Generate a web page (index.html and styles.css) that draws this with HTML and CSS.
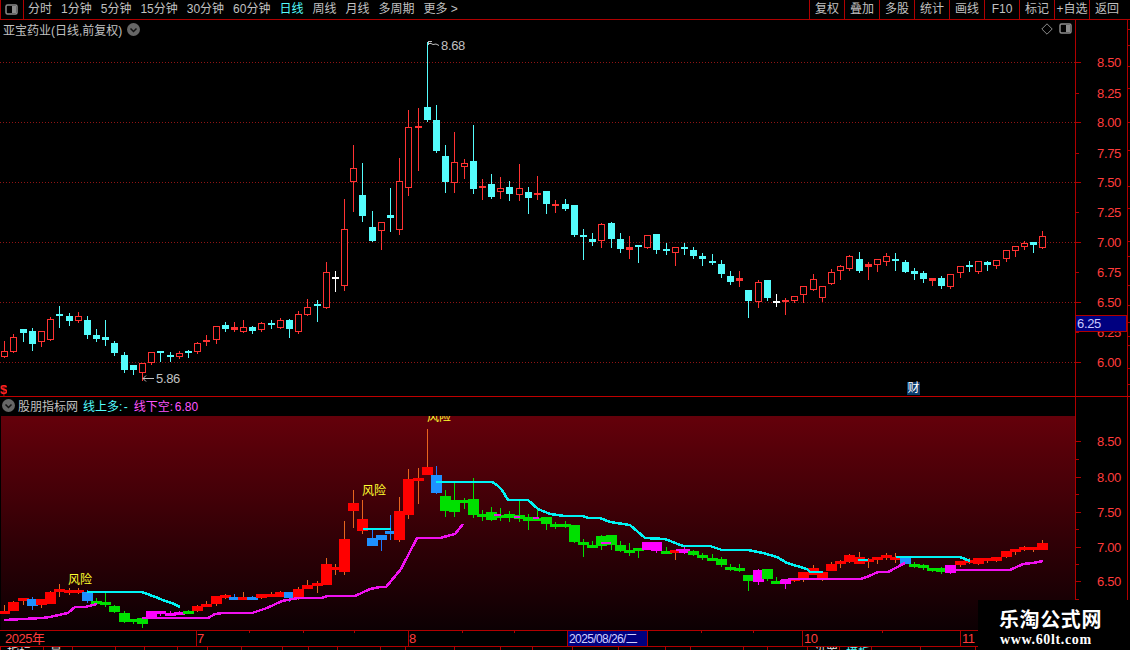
FILE: index.html
```html
<!DOCTYPE html>
<html lang="zh-CN">
<head>
<meta charset="utf-8">
<title>亚宝药业 K线</title>
<link rel="stylesheet" href="styles.css">
</head>
<body>
<div class="app">
  <header class="toolbar">
    <div class="layout-btn">
      <svg width="14" height="12" viewBox="0 0 14 12"><rect class="ic-frame" x="1" y="1" width="11" height="9" rx="1.5"/><rect class="ic-fill" x="7" y="2" width="4" height="7"/></svg>
    </div>
    <nav class="periods">
      <span>分时</span><span>1分钟</span><span>5分钟</span><span>15分钟</span><span>30分钟</span><span>60分钟</span><span class="active">日线</span><span>周线</span><span>月线</span><span>多周期</span><span>更多 &gt;</span>
    </nav>
    <div class="actions">
      <span>复权</span><span>叠加</span><span>多股</span><span>统计</span><span>画线</span><span>F10</span><span>标记</span><span>+自选</span><span class="last">返回</span>
    </div>
  </header>

  <section class="panel panel-upper">
    <svg id="upper" class="chart" viewBox="0 20 1130 376" width="1130" height="376"></svg>
    <div class="legend legend-upper">
      <span class="stock">亚宝药业(日线,前复权)</span>
      <svg class="chev" width="13" height="13" viewBox="0 0 13 13"><circle cx="6.5" cy="6.5" r="6.5"/><path d="M3.5 5.5l3 3 3-3"/></svg>
    </div>
    <div class="tools">
      <svg width="12" height="12" viewBox="0 0 12 12"><path class="ic-line" d="M6 .8L11.2 6 6 11.2.8 6z"/></svg>
      <svg width="14" height="12" viewBox="0 0 14 12"><rect class="ic-frame" x="1" y="1" width="11" height="9" rx="1.5"/><rect class="ic-fill" x="7" y="2" width="4" height="7"/></svg>
    </div>
    <div class="cai">财</div>
    <div class="clip-mark">$</div>
  </section>

  <section class="panel panel-lower">
    <svg id="lower" class="chart" viewBox="0 397 1130 233" width="1130" height="233">
      <defs>
        <linearGradient id="bg" x1="0" y1="0" x2="0" y2="1">
          <stop offset="0" stop-color="#64000a"/>
          <stop offset="1" stop-color="#0c0003"/>
        </linearGradient>
        <clipPath id="plot"><rect x="0" y="416" width="1075" height="214"/></clipPath>
      </defs>
    </svg>
    <div class="legend legend-lower">
      <svg class="chev" width="13" height="13" viewBox="0 0 13 13"><circle cx="6.5" cy="6.5" r="6.5"/><path d="M3.5 5.5l3 3 3-3"/></svg>
      <span class="ind">股朋指标网</span>
      <span class="up-val">线上多: -</span>
      <span class="down-val">线下空: 6.80</span>
    </div>
  </section>

  <section class="time-axis">
    <svg id="time" class="chart" viewBox="0 630 1130 17" width="1130" height="17"></svg>
  </section>

  <footer id="tabs" class="tabs"></footer>

  <aside class="watermark">
    <div class="wm-title">乐淘公式网</div>
    <div class="wm-url">www.60lt.com</div>
  </aside>
</div>
<script src="script.js"></script>
</body>
</html>
```
FILE: styles.css
```css
* { box-sizing: border-box; }
html, body { margin: 0; padding: 0; background: #000; }
body {
  width: 1130px;
  height: 650px;
  overflow: hidden;
  font-family: "Liberation Sans", "Noto Sans CJK SC", sans-serif;
  font-size: 12px;
  color: #c0c0c0;
}
.app { position: relative; display: flex; flex-direction: column; width: 1130px; height: 650px; overflow: hidden; }

.toolbar { display: flex; align-items: stretch; height: 20px; flex: none; border-bottom: 1px solid #b00000; }
.layout-btn { width: 24px; border-left: 1px solid #b00000; border-right: 1px solid #b00000; display: flex; align-items: center; justify-content: center; }
.periods { display: flex; align-items: center; gap: 9px; padding-left: 4px; white-space: nowrap; line-height: 19px; }
.periods .active { color: #54fcfc; }
.actions { display: flex; margin-left: auto; }
.actions span { width: 35px; text-align: center; line-height: 19px; border-left: 1px solid #b00000; white-space: nowrap; }
.actions .last { width: 41px; padding-right: 6px; }

.ic-frame { fill: none; stroke: #8c8c8c; stroke-width: 1.5; }
.ic-fill { fill: #8c8c8c; }
.ic-line { fill: none; stroke: #8c8c8c; stroke-width: 1; }

.panel { position: relative; flex: none; }
.panel-upper { height: 377px; border-bottom: 1px solid #c00000; }
.panel-lower { height: 233px; }
.chart { display: block; }

.legend { position: absolute; display: flex; align-items: center; white-space: nowrap; }
.legend-upper { left: 3px; top: 1px; gap: 5px; height: 16px; }
.legend-lower { left: 2px; top: 0; gap: 6px; height: 16px; }
.stock { color: #c0c0c0; }
.chev { flex: none; }
.chev circle { fill: #666; }
.chev path { fill: none; stroke: #111; stroke-width: 1.5; }
.ind { margin-left: -3px; color: #c0c0c0; }
.up-val { color: #54fcfc; margin-left: -1px; word-spacing: -2px; }
.down-val { color: #fc54fc; word-spacing: -1.5px; }

.tools { position: absolute; left: 1041px; top: 3px; display: flex; gap: 6px; align-items: center; }
.cai { position: absolute; left: 907px; top: 362px; width: 13px; height: 13px; background: #0c3c6c; color: #fff; font-size: 12px; line-height: 13px; text-align: center; }
.clip-mark { position: absolute; left: 0; top: 363px; width: 7px; height: 13px; overflow: hidden; color: #ff2020; font-weight: bold; font-size: 13px; line-height: 13px; }

.time-axis { flex: none; height: 17px; }
.tabs { display: flex; flex: none; height: 3px; overflow: hidden; }
.tab { flex: none; height: 3px; border-left: 1px solid #b00000; color: #e0e0e0; font-size: 12px; line-height: 12px; white-space: nowrap; overflow: hidden; padding-left: 6px; }
.tab.hot { color: #54fcfc; }

.watermark { position: absolute; right: 0; bottom: 0; width: 152px; height: 50px; background: #000; padding-left: 21px; }
.wm-title { color: #fff; font-weight: bold; font-size: 20px; line-height: 24px; letter-spacing: .6px; margin-top: 7px; font-family: "Noto Sans CJK SC", sans-serif; }
.wm-url { color: #fff; font-family: "Liberation Serif", serif; font-weight: bold; font-size: 14px; line-height: 16px; margin-top: 1px; margin-left: 1px; letter-spacing: .65px; }

/* svg parts */
.grid { stroke: #901414; stroke-width: 1; stroke-dasharray: 1 2; shape-rendering: crispEdges; }
.axis { stroke: #b00000; stroke-width: 1; fill: none; }
.price { fill: #ff3c3c; font-size: 13px; letter-spacing: -.35px; font-family: "Liberation Sans", sans-serif; }
.note { fill: #c0c0c0; font-size: 13px; letter-spacing: -.35px; }
.note-line { stroke: #c0c0c0; stroke-width: 1; fill: none; }
.cur-box { fill: #000080; stroke: #b00000; stroke-width: 1; }
.cur-text { fill: #c8c8ff; font-size: 13px; letter-spacing: -.35px; }

.c-r { fill: #000; stroke: #ff3232; stroke-width: 1; }
.s-r { fill: #ff3232; }
.s-c { fill: #54fcfc; }
.s-w { fill: #fff; }

.b-r { fill: #ff0000; } .w-r { fill: #e8641e; }
.b-g { fill: #00e000; } .w-g { fill: #00e000; }
.b-b { fill: #1e90ff; } .w-b { fill: #1e78ff; }
.b-m { fill: #ff00ff; } .w-m { fill: #ff00ff; }

.line-cyan { fill: none; stroke: #00f4f4; stroke-width: 2.5; }
.line-mag { fill: none; stroke: #f010f0; stroke-width: 2.5; }
.risk { fill: #ffff30; font-size: 12px; font-family: "Noto Sans CJK SC", sans-serif; }

.t-label { fill: #ff3c3c; font-size: 13px; letter-spacing: -.5px; font-family: "Liberation Sans", "Noto Sans CJK SC", sans-serif; }
.t-box { fill: #000080; stroke: #b00000; stroke-width: 1; }
.t-cur { fill: #d0d0ff; font-size: 12px; letter-spacing: -.6px; font-family: "Liberation Sans", "Noto Sans CJK SC", sans-serif; }
```
FILE: script.js
```javascript
// type, high, bodyTop, bodyBottom, low (pixel rows of the upper chart)
var K = [
['r',341,351,357,357],['r',334,337,352,352],['c',329,329,333,341],['c',328,331,344,350],['r',331,331,342,346],
['r',317,319,340,340],['c',306,314,316,327],['c',313,316,321,325],['r',312,316,321,322],['c',316,320,335,338],
['c',329,335,339,341],['c',320,337,340,345],['c',341,343,353,355],['c',352,355,370,372],['c',365,365,370,374],
['r',363,363,373,380],['r',352,352,363,364],['c',351,351,352,361],['c',352,355,357,361],['r',351,353,357,358],
['c',350,351,352,357],['r',342,343,352,353],['r',335,340,342,345],['r',326,326,340,343],['c',322,325,329,331],
['r',322,327,330,331],['r',320,327,332,332],['c',326,327,331,333],['r',322,323,330,331],['c',320,323,325,328],
['r',318,320,328,328],['c',319,320,329,337],['r',311,314,332,333],['r',299,307,315,315],['c',300,304,306,321],
['r',262,272,308,308],['w',271,277,278,291],['r',199,229,286,290],['r',145,168,182,211],['c',163,195,216,221],
['c',211,227,241,241],['r',222,222,231,249],['c',188,215,218,231],['r',158,181,230,234],['r',110,127,188,195],
['r',108,126,128,170],['c',42,107,120,121],['c',105,120,151,152],['c',145,156,182,192],['r',132,162,183,192],
['r',159,163,167,178],['c',125,161,189,193],['r',179,186,188,199],['c',174,184,197,198],['r',177,188,192,198],
['c',181,187,194,200],['r',164,188,195,200],['c',187,192,198,213],['r',176,193,195,199],['c',191,191,204,213],
['r',200,204,206,212],['c',199,204,209,210],['c',205,205,235,236],['c',229,235,237,259],['c',233,239,242,245],
['r',223,224,241,247],['c',222,223,239,247],['c',233,239,249,252],['r',236,247,250,258],['c',245,245,247,262],
['r',235,235,248,248],['c',234,234,250,253],['c',243,249,250,254],['r',247,247,253,265],['c',243,247,248,254],
['c',247,250,256,258],['c',253,256,259,265],['c',254,261,262,264],['c',260,264,274,277],['c',271,276,282,284],
['r',271,278,281,286],['c',290,290,301,317],['r',280,282,302,307],['c',280,280,298,300],['w',294,301,302,306],
['r',298,300,302,314],['r',296,296,301,302],['r',286,286,295,302],['r',274,279,290,290],['r',286,286,298,301],
['r',269,272,284,284],['r',265,266,271,279],['r',255,256,269,270],['c',252,259,271,272],['r',262,264,267,279],
['r',259,259,265,271],['r',253,256,262,265],['c',253,259,260,270],['c',260,262,272,272],['c',268,271,274,279],
['c',271,273,279,282],['r',278,278,281,285],['c',276,278,286,288],['r',274,274,287,288],['r',266,266,273,277],
['c',261,265,267,271],['r',261,261,272,273],['c',261,262,265,270],['r',260,260,266,268],['r',250,250,259,261],
['r',246,246,251,256],['r',241,243,247,249],['c',242,242,245,252],['r',231,236,248,248]
];
var LOWER = 'rrrbrrrrrbggggggmmmmgrrrrbrbrrrbrrrrrrrrbbbrrrrb' + 'g'.repeat(22) + 'mmgrmgggggggmggm' + 'r'.repeat(12) + 'bggggm' + 'r'.repeat(10);

function cx(i) { return Math.round(4.2 + i * 9.187); }
function ly(y) { return Math.round(441 + (y - 62.3) * 0.5875); }
function rect(cls, x, y, w, h) { return '<rect class="' + cls + '" x="' + x + '" y="' + y + '" width="' + w + '" height="' + h + '"/>'; }
function hline(cls, x1, x2, y) { return '<path class="' + cls + '" d="M' + x1 + ' ' + (y + .5) + 'H' + x2 + '"/>'; }
function vline(cls, x, y1, y2) { return '<path class="' + cls + '" d="M' + (x + .5) + ' ' + y1 + 'V' + y2 + '"/>'; }
function text(cls, x, y, s) { return '<text class="' + cls + '" x="' + x + '" y="' + y + '">' + s + '</text>'; }
function poly(cls, pts) { return '<polyline class="' + cls + '" shape-rendering="crispEdges" points="' + pts + '"/>'; }

/* upper chart */
var u = '';
[62, 122, 182, 242, 302, 362].forEach(function (y) { u += hline('grid', 0, 1075, y); });
K.forEach(function (k, i) {
  var c = cx(i), t = k[0], hi = k[1], top = k[2], bot = k[3], lo = k[4];
  if (t === 'r') {
    u += rect('s-r', c, hi, 1, lo - hi + 1);
    if (bot - top < 4) u += rect('s-r', c - 3, top, 7, Math.max(bot - top, 2));
    else u += '<rect class="c-r" x="' + (c - 2.5) + '" y="' + (top + .5) + '" width="6" height="' + (bot - top - 1) + '"/>';
  } else {
    var cl = t === 'c' ? 's-c' : 's-w';
    u += rect(cl, c, hi, 1, lo - hi + 1);
    u += rect(cl, c - 3, top, 7, Math.max(bot - top, 2));
  }
});
u += '<path class="note-line" d="M428.5 41V45M428.5 41.500H432M428.5 43.500H431M430 43L433 44.500L436 44L439 45.500"/>';
u += text('note', 441, 50, '8.68');
u += '<path class="note-line" d="M143 378.500H154M146 375.500L143 378.500L146 381.500"/>';
u += text('note', 156, 383, '5.86');
// axis
u += vline('axis', 1075, 20, 396) + vline('axis', 1127, 20, 396);
[[62,'8.50'],[122,'8.00'],[182,'7.50'],[242,'7.00'],[302,'6.50'],[362,'6.00']].forEach(function (p) {
  u += hline('axis', 1075, 1081, p[0]);
  u += text('price', 1097, p[0] + 5, p[1]);
});
[[93,'8.25'],[153,'7.75'],[212,'7.25'],[272,'6.75'],[332,'6.25']].forEach(function (p) {
  u += hline('axis', 1075, 1079, p[0]);
  u += text('price', 1097, p[0] + 5, p[1]);
});
[29,45,66,88,122,150,186,208,241,256,285,305,322,336,345,368,384].forEach(function (y) { u += hline('axis', 1127, 1130, y); });
u += '<rect class="cur-box" x="1075.5" y="315.500" width="51" height="16"/>';
u += text('cur-text', 1077, 328, '6.25');
document.getElementById('upper').innerHTML = u;

/* lower chart */
var l = '';
l += '<rect x="1" y="416" width="1074" height="214" fill="url(#bg)"/>';
K.forEach(function (k, i) {
  var c = cx(i), t = LOWER[i], hi = ly(k[1]), top = ly(k[2]), bot = ly(k[3]), lo = ly(k[4]);
  l += rect('w-' + t, c, hi, 1, Math.max(lo - hi, 1));
  l += rect('b-' + t, c - 5, top, 11, Math.max(bot - top, 3));
});
l += poly('line-cyan', '87,592 142,592 150,595 158,598 165,601 172,603 180,607');
l += poly('line-cyan', '363,529 391,529');
l += poly('line-cyan', '436,482 492,482 497,485 502,490 508,500 528,500 538,509 550,514 565,516 583,516 588,518 600,518 610,522 630,525 645,538 665,539 683,546 710,546 722,550 748,550 763,553 777,557 787,563 807,569 810,572 823,572');
l += poly('line-cyan', '858,560 868,560');
l += poly('line-cyan', '896,557 960,557 970,561');
l += poly('line-mag', '4,620 23,619 42,618 50,617 63,614 68,613 75,607 78,607 85,607 97,604');
l += poly('line-mag', '142,618 208,618 215,614 223,613 252,613 267,608 282,601 298,598 322,598 327,596 355,596 370,589 380,587 386,587 401,569 417,538 440,538 455,534 463,524');
l += poly('line-mag', '494,515 501,515') + poly('line-mag', '514,517 520,517') + poly('line-mag', '533,518 539,518');
l += poly('line-mag', '601,543 611,543') + poly('line-mag', '676,550 690,550');
l += poly('line-mag', '780,581 793,579 860,579 867,577 878,572 888,572 905,563');
l += poly('line-mag', '947,570 1010,570 1023,564 1033,563 1043,561');
l += '<g clip-path="url(#plot)">';
l += text('risk', 68, 584, '风险') + text('risk', 362, 495, '风险') + text('risk', 427, 421, '风险');
l += '</g>';
l += vline('axis', 1075, 397, 630) + vline('axis', 1127, 397, 630);
[[441,'8.50'],[477,'8.00'],[512,'7.50'],[547,'7.00'],[581,'6.50']].forEach(function (p) {
  l += hline('axis', 1075, 1081, p[0]);
  l += text('price', 1097, p[0] + 5, p[1]);
});
[459,494,529,564,599].forEach(function (y) { l += hline('axis', 1075, 1079, y); });
document.getElementById('lower').insertAdjacentHTML('beforeend', l);

/* time axis */
var t = hline('axis', 0, 1130, 630) + hline('axis', 0, 1130, 646);
[[5,0,'2025年'],[197,196,'7'],[409,408,'8'],[804,802,'10'],[962,960,'11']].forEach(function (p) {
  if (p[1]) t += vline('axis', p[1], 630, 646);
  t += text('t-label', p[0], 643, p[2]);
});
[249,303,354,462,514,701,753,882].forEach(function (x) { t += vline('axis', x, 630, 633); });
t += '<rect class="t-box" x="567.500" y="630.500" width="80" height="16"/>';
t += text('t-cur', 569, 643, '2025/08/26/二');
document.getElementById('time').innerHTML = t;

/* bottom tab strip, cut off by the window */
var stops = [0,43,72,115,144,177,207,241,282,308,337,380,405,454,500,532,572,618,665,690,743,767,807,839,871,920,975];
var labels = { 0: '指标', 1: '量', 22: '设置', 23: '模板' };
var tabs = document.getElementById('tabs');
stops.forEach(function (x, i) {
  var d = document.createElement('div');
  d.className = 'tab' + (i === 23 ? ' hot' : '');
  d.style.width = ((stops[i + 1] || 1130) - x) + 'px';
  d.textContent = labels[i] || '';
  tabs.appendChild(d);
});
```
